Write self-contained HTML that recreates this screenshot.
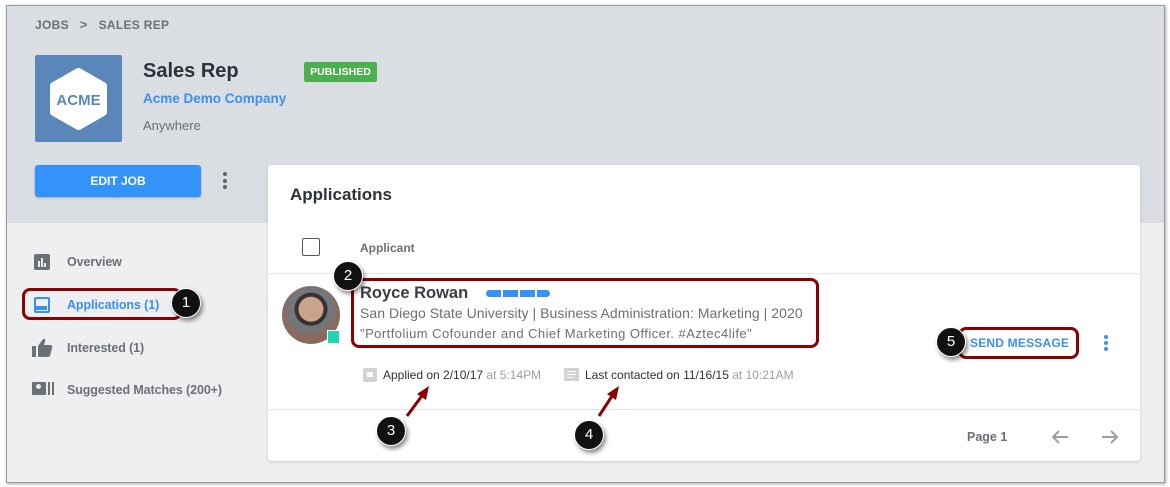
<!DOCTYPE html>
<html><head><style>
*{box-sizing:border-box;margin:0;padding:0}
body{width:1170px;height:487px;background:#fff;font-family:"Liberation Sans",sans-serif;position:relative;overflow:hidden}
.frame{position:absolute;left:6px;top:5px;width:1159px;height:478px;border:1px solid #9a9a9a;box-shadow:1px 1px 3px rgba(0,0,0,.35);background:#eeeff1}
.hdr{position:absolute;left:0;top:0;width:100%;height:217px;background:#dadee3}
.a{position:absolute}
.card{position:absolute;left:261px;top:159px;width:872px;height:296px;background:#fff;border-radius:3px;box-shadow:0 1px 3px rgba(0,0,0,.15)}
.circ{position:absolute;width:30px;height:30px;border-radius:50%;background:#111;color:#fff;font-size:15px;text-align:center;line-height:28px;box-shadow:2px 3px 4px rgba(0,0,0,.45);border:1.5px solid #fff}
.red{position:absolute;border:3.5px solid #8b0000;border-radius:8px}
.nav{position:absolute;left:60px;font-size:12.5px;color:#6b6f76;font-weight:bold;letter-spacing:-.1px}
</style></head><body>
<div class="frame">
<div class="hdr"></div>
<div class="a" style="left:28px;top:11px;font-size:12px;color:#6b6f76;font-weight:bold;letter-spacing:.3px">JOBS &nbsp;&nbsp;<span style="font-size:13px">&gt;</span>&nbsp;&nbsp; SALES REP</div>
<div class="a" style="left:28px;top:49px;width:87px;height:87px;background:#5b86b9;border-radius:2px">
<svg width="87" height="87" viewBox="0 0 87 87"><polygon points="43.5,17 68,31 68,57 43.5,71 19,57 19,31" fill="#fff" stroke="#fff" stroke-width="8" stroke-linejoin="round"/><text x="43.5" y="50" text-anchor="middle" font-family="Liberation Sans" font-weight="bold" font-size="15" fill="#5b86b9">ACME</text></svg></div>
<div class="a" style="left:136px;top:54px;font-size:20px;color:#2d3138;font-weight:bold">Sales Rep</div>
<div class="a" style="left:297px;top:56px;width:73px;height:20px;background:#4caf50;border-radius:2px;color:#fff;font-size:10.5px;font-weight:bold;text-align:center;line-height:20px">PUBLISHED</div>
<div class="a" style="left:136px;top:85px;font-size:13.5px;color:#3a8ff2;font-weight:bold">Acme Demo Company</div>
<div class="a" style="left:136px;top:112px;font-size:13px;color:#6b6f76">Anywhere</div>
<div class="a" style="left:28px;top:159px;width:166px;height:32px;background:#3492fb;border-radius:3px;color:#fff;font-size:12px;font-weight:bold;text-align:center;line-height:32px;box-shadow:0 1px 2px rgba(0,0,0,.25)">EDIT JOB</div>
<div class="a" style="left:216px;top:166px;width:4px;font-size:0"><div style="width:4px;height:4px;border-radius:2px;background:#5f6368;margin-bottom:2.5px"></div><div style="width:4px;height:4px;border-radius:2px;background:#5f6368;margin-bottom:2.5px"></div><div style="width:4px;height:4px;border-radius:2px;background:#5f6368"></div></div>

<div class="a" style="left:27px;top:248px;width:16px;height:16px;background:#6b6f76;border-radius:2px"><div class="a" style="left:4px;top:7px;width:2px;height:6px;background:#eee"></div><div class="a" style="left:7px;top:4px;width:2px;height:9px;background:#eee"></div><div class="a" style="left:10px;top:9px;width:2px;height:4px;background:#eee"></div></div>
<div class="nav" style="top:249px">Overview</div>
<div class="red" style="left:15px;top:282px;width:160px;height:32px"></div>
<div class="a" style="left:27px;top:291px;width:16px;height:16px;border:2.5px solid #3a8ff2;border-radius:2px"><div class="a" style="left:0;top:7px;width:11px;height:4px;background:#3a8ff2"></div></div>
<div class="nav" style="top:292px;color:#3a8ff2">Applications (1)</div>
<div class="circ" style="left:164px;top:282px">1</div>
<svg class="a" style="left:25px;top:332px" width="22" height="20"><rect x="0" y="8" width="4" height="11" fill="#6b6f76"/><path d="M6 8 L11 1 Q14 0 13 4 L12 7 H19 Q21 8 20 10 L18 18 Q17 19 15 19 H6 Z" fill="#6b6f76"/></svg>
<div class="nav" style="top:335px">Interested (1)</div>
<div class="a" style="left:25px;top:376px;width:14px;height:13px;background:#6b6f76;border-radius:1px"><div class="a" style="left:4px;top:2px;width:5px;height:5px;border-radius:50%;background:#eee"></div></div><div class="a" style="left:41px;top:376px;width:2px;height:13px;background:#6b6f76"></div><div class="a" style="left:45px;top:376px;width:2px;height:13px;background:#6b6f76"></div>
<div class="nav" style="top:377px">Suggested Matches (200+)</div>

<div class="card">
<div class="a" style="left:22px;top:20px;font-size:17px;color:#2d3138;font-weight:bold">Applications</div>
<div class="a" style="left:34px;top:73px;width:18px;height:18px;border:1.5px solid #555;border-radius:2px"></div>
<div class="a" style="left:92px;top:76px;font-size:12px;color:#6b6f76;font-weight:bold">Applicant</div>
<div class="a" style="left:0;top:108px;width:100%;height:1px;background:#e4e6e9"></div>
<div class="a" style="left:14px;top:121px;width:58px;height:58px;border-radius:50%;background:radial-gradient(circle at 50% 40%,#c9a48a 0 12px,#3a3030 13px 16px,#6d7a84 17px,#8a6a5e 29px)"></div>
<div class="a" style="left:59px;top:165px;width:13px;height:14px;background:#1ed6b4;border:1px solid #fff"></div>
<div class="red" style="left:83px;top:113px;width:468px;height:70px"></div>
<div class="a" style="left:92px;top:119px;font-size:16.5px;color:#3a3e45;font-weight:bold">Royce Rowan</div>
<div class="a" style="left:218px;top:125px;width:64px;height:7px;border-radius:4px;background:repeating-linear-gradient(90deg,#3492fb 0 15px,#fff 15px 17px)"></div>
<div class="a" style="left:92px;top:140px;font-size:14px;color:#6b6f76;letter-spacing:.05px">San Diego State University | Business Administration: Marketing | 2020</div>
<div class="a" style="left:92px;top:161px;font-size:13px;color:#6b6f76;letter-spacing:.45px">"Portfolium Cofounder and Chief Marketing Officer. #Aztec4life"</div>
<div class="a" style="left:95px;top:203px;width:14px;height:14px;background:#d0d2d5;border-radius:2px"><div class="a" style="left:4px;top:4px;width:6px;height:5px;background:#fff"></div></div>
<div class="a" style="left:115px;top:203px;font-size:12px;color:#2d3138">Applied on 2/10/17 <span style="color:#9a9ea4">at 5:14PM</span></div>
<div class="a" style="left:296px;top:203px;width:15px;height:13px;background:#d0d2d5;border-radius:1px"><div class="a" style="left:3px;top:3px;width:9px;height:1px;background:#fff"></div><div class="a" style="left:3px;top:6px;width:9px;height:1px;background:#fff"></div><div class="a" style="left:3px;top:9px;width:6px;height:1px;background:#fff"></div></div>
<div class="a" style="left:317px;top:203px;font-size:12px;color:#2d3138">Last contacted on 11/16/15 <span style="color:#9a9ea4">at 10:21AM</span></div>
<div class="red" style="left:690px;top:162px;width:121px;height:32px"></div>
<div class="a" style="left:702px;top:171px;font-size:12px;color:#3a8ff2;font-weight:bold;letter-spacing:.2px">SEND MESSAGE</div>
<div class="circ" style="left:668px;top:162px">5</div>
<div class="a" style="left:836px;top:170px"><div style="width:4px;height:4px;border-radius:2px;background:#3a8ff2;margin-bottom:2px"></div><div style="width:4px;height:4px;border-radius:2px;background:#3a8ff2;margin-bottom:2px"></div><div style="width:4px;height:4px;border-radius:2px;background:#3a8ff2"></div></div>
<div class="a" style="left:0;top:244px;width:100%;height:1px;background:#e4e6e9"></div>
<div class="a" style="left:699px;top:265px;font-size:12.5px;color:#6b6f76;font-weight:bold">Page 1</div>
<svg class="a" style="left:782px;top:264px" width="20" height="16"><path d="M18 8H3M9 2L3 8l6 6" stroke="#9a9ea4" stroke-width="2" fill="none"/></svg>
<svg class="a" style="left:832px;top:264px" width="20" height="16"><path d="M2 8h15M11 2l6 6-6 6" stroke="#9a9ea4" stroke-width="2" fill="none"/></svg>
</div>
<div class="circ" style="left:326px;top:255px">2</div>
<svg class="a" style="left:380px;top:375px" width="260" height="60"><path d="M20 35L37 12" stroke="#8b0000" stroke-width="3"/><polygon points="42,5 30,13 39,19" fill="#8b0000"/><path d="M212 35L227 12" stroke="#8b0000" stroke-width="3"/><polygon points="232,5 220,13 229,19" fill="#8b0000"/></svg>
<div class="circ" style="left:369px;top:410px">3</div>
<div class="circ" style="left:567px;top:414px">4</div>
</div>
</body></html>
